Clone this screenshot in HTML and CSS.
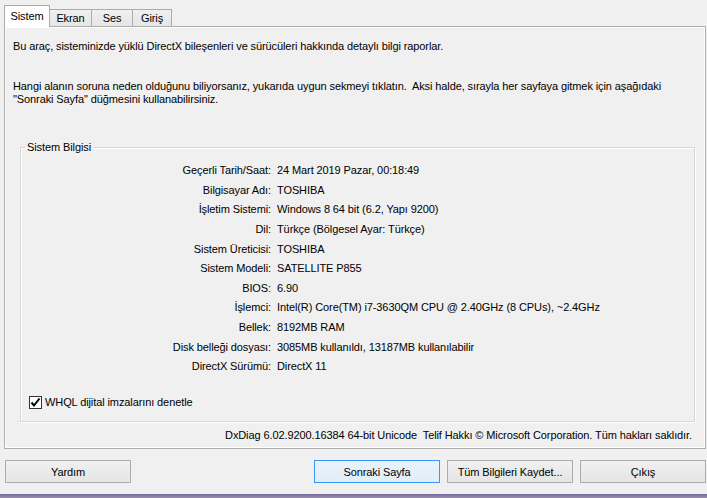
FILE: index.html
```html
<!DOCTYPE html>
<html lang="tr">
<head>
<meta charset="utf-8">
<title>DirectX Tanılama Aracı</title>
<link rel="stylesheet" href="styles.css">
</head>
<body>
<div class="dialog">
  <div class="tabs">
    <div class="tab active t-sistem">Sistem</div>
    <div class="tab t-ekran">Ekran</div>
    <div class="tab t-ses">Ses</div>
    <div class="tab t-giris">Giriş</div>
  </div>
  <div class="panel">
    <p class="intro">Bu araç, sisteminizde yüklü DirectX bileşenleri ve sürücüleri hakkında detaylı bilgi raporlar.</p>
    <p class="hint">Hangi alanın soruna neden olduğunu biliyorsanız, yukarıda uygun sekmeyi tıklatın.&nbsp; Aksi halde, sırayla her sayfaya gitmek için aşağıdaki<br>"Sonraki Sayfa" düğmesini kullanabilirsiniz.</p>
    <fieldset class="group">
      <legend>Sistem Bilgisi</legend>
      <dl class="info">
        <dt>Geçerli Tarih/Saat:</dt><dd>24 Mart 2019 Pazar, 00:18:49</dd>
        <dt>Bilgisayar Adı:</dt><dd>TOSHIBA</dd>
        <dt>İşletim Sistemi:</dt><dd>Windows 8 64 bit (6.2, Yapı 9200)</dd>
        <dt>Dil:</dt><dd>Türkçe (Bölgesel Ayar: Türkçe)</dd>
        <dt>Sistem Üreticisi:</dt><dd>TOSHIBA</dd>
        <dt>Sistem Modeli:</dt><dd>SATELLITE P855</dd>
        <dt>BIOS:</dt><dd>6.90</dd>
        <dt>İşlemci:</dt><dd>Intel(R) Core(TM) i7-3630QM CPU @ 2.40GHz (8 CPUs), ~2.4GHz</dd>
        <dt>Bellek:</dt><dd>8192MB RAM</dd>
        <dt>Disk belleği dosyası:</dt><dd>3085MB kullanıldı, 13187MB kullanılabilir</dd>
        <dt>DirectX Sürümü:</dt><dd>DirectX 11</dd>
      </dl>
      <div class="check">
        <span class="box"><svg width="11" height="11" viewBox="0 0 11 11"><path d="M1.5 5.5 L4 8.5 L9.5 1.5" fill="none" stroke="#000" stroke-width="2"/></svg></span>
        <span>WHQL dijital imzalarını denetle</span>
      </div>
    </fieldset>
    <div class="footer">DxDiag 6.02.9200.16384 64-bit Unicode&nbsp; Telif Hakkı © Microsoft Corporation. Tüm hakları saklıdır.</div>
  </div>
  <div class="buttons">
    <button class="btn">Yardım</button>
    <div class="right-buttons">
      <button class="btn default">Sonraki Sayfa</button>
      <button class="btn">Tüm Bilgileri Kaydet...</button>
      <button class="btn">Çıkış</button>
    </div>
  </div>
  <div class="strip"></div>
</div>
</body>
</html>
```

FILE: styles.css
```css
* { box-sizing: border-box; }
html, body { margin: 0; padding: 0; }
body {
  background: #f0f0f0;
  font-family: "Liberation Sans", Arial, sans-serif;
  font-size: 11px;
  line-height: 13px;
  letter-spacing: -0.1px;
  color: #000;
}
.dialog {
  width: 707px;
  height: 498px;
  display: flex;
  flex-direction: column;
  overflow: hidden;
}
.tabs {
  display: flex;
  align-items: flex-end;
  height: 26px;
  padding: 5px 0 0 4px;
}
.tab {
  height: 17px;
  border: 1px solid #acacac;
  border-bottom: none;
  background: linear-gradient(#f0f0f0, #e5e5e5);
  margin-left: -1px;
  text-align: center;
  line-height: 16px;
}
.tab.active {
  height: 22px;
  margin-left: 0;
  margin-bottom: -1px;
  background: #fff;
  position: relative;
  z-index: 1;
  line-height: 20px;
}
.t-sistem { width: 46px; }
.t-ekran { width: 43px; }
.t-ses { width: 42px; }
.t-giris { width: 40px; }
.panel {
  margin-left: 4px;
  width: 702px;
  height: 423px;
  border: 1px solid #adadad;
  box-shadow: inset 0 0 0 1px #fff;
  padding: 13px 10px 0 8px;
}
.intro { margin: 0; }
.hint { margin: 27px 0 0 0; }
.group {
  margin: 35px 0 0 7px;
  padding: 0;
  border: 1px solid #d5d5d5;
  box-shadow: 1px 1px 0 #fff, inset 1px 1px 0 #fff;
  min-width: 0;
}
.group legend {
  margin-left: 4px;
  padding: 0 2px;
}
.info {
  display: grid;
  grid-template-columns: 250px 1fr;
  grid-auto-rows: 19.6px;
  column-gap: 6px;
  align-items: center;
  margin: 7px 0 0 0;
}
.info dt { text-align: right; }
.info dd { margin: 0; }
.check {
  display: flex;
  align-items: center;
  height: 13px;
  margin: 19px 0 12px 8px;
}
.box {
  width: 13px;
  height: 13px;
  border: 1px solid #333;
  background: #fff;
  margin-right: 3px;
  display: flex;
  align-items: center;
  justify-content: center;
}
.box svg { display: block; }
.footer {
  margin-top: 7px;
  text-align: right;
  padding-right: 3px;
}
.buttons {
  display: flex;
  justify-content: space-between;
  margin-top: 11px;
  padding: 0 1px 0 5px;
}
.right-buttons {
  display: flex;
  gap: 7px;
}
.btn {
  width: 126px;
  height: 23px;
  border: 1px solid #acacac;
  background: linear-gradient(#f0f0f0, #e5e5e5);
  font-family: inherit;
  font-size: 11px;
  letter-spacing: -0.1px;
  color: #000;
  padding: 0;
}
.btn.default {
  border-color: #3399ff;
  background: linear-gradient(#eaf3fb, #e1edf8);
}
.strip {
  margin-top: auto;
  height: 4px;
  background: linear-gradient(#77699a, #9d91b3);
}
```
